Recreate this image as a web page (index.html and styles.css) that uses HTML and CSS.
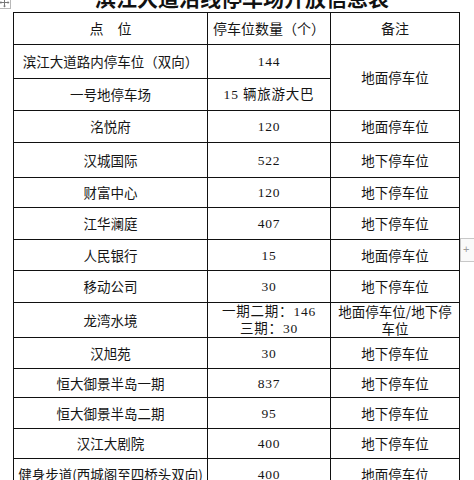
FILE: index.html
```html
<!DOCTYPE html>
<html lang="zh-CN">
<head>
<meta charset="utf-8">
<title>滨江大道沿线停车场开放信息表</title>
<link rel="stylesheet" href="styles.css">
</head>
<body>
<div class="page">
  <svg class="move-handle" width="13" height="13" viewBox="0 0 13 13">
    <rect x="0.5" y="0.5" width="12" height="12" fill="#fff" stroke="#b8b8b8"/>
    <path d="M6.5 2v9M2 6.5h9" stroke="#777" stroke-width="1"/>
    <path d="M6.5 1.5l-1.5 1.8h3zM6.5 11.5l-1.5-1.8h3zM1.5 6.5l1.8-1.5v3zM11.5 6.5l-1.8-1.5v3z" fill="#777"/>
  </svg>
  <h1 class="title">滨江大道沿线停车场开放信息表</h1>
  <table class="info">
    <colgroup>
      <col class="c1"><col class="c2"><col class="c3">
    </colgroup>
    <tr class="r32 head">
      <th>点　位</th><th>停车位数量（个）</th><th>备注</th>
    </tr>
    <tr class="r34">
      <td>滨江大道路内停车位（双向）</td><td class="num">144</td><td rowspan="2">地面停车位</td>
    </tr>
    <tr class="r32">
      <td>一号地停车场</td><td class="num">15 辆旅游大巴</td>
    </tr>
    <tr class="r32">
      <td>洺悦府</td><td class="num">120</td><td>地面停车位</td>
    </tr>
    <tr class="r35">
      <td>汉城国际</td><td class="num">522</td><td>地下停车位</td>
    </tr>
    <tr class="r30">
      <td>财富中心</td><td class="num">120</td><td>地下停车位</td>
    </tr>
    <tr class="r32">
      <td>江华澜庭</td><td class="num">407</td><td>地下停车位</td>
    </tr>
    <tr class="r31">
      <td>人民银行</td><td class="num">15</td><td>地面停车位</td>
    </tr>
    <tr class="r32">
      <td>移动公司</td><td class="num">30</td><td>地下停车位</td>
    </tr>
    <tr class="r35 two">
      <td>龙湾水境</td><td class="num">一期二期：146<br>三期：30</td><td>地面停车位/地下停<br>车位</td>
    </tr>
    <tr class="r31">
      <td>汉旭苑</td><td class="num">30</td><td>地下停车位</td>
    </tr>
    <tr class="r29">
      <td>恒大御景半岛一期</td><td class="num">837</td><td>地下停车位</td>
    </tr>
    <tr class="r31">
      <td>恒大御景半岛二期</td><td class="num">95</td><td>地下停车位</td>
    </tr>
    <tr class="r30">
      <td>汉江大剧院</td><td class="num">400</td><td>地下停车位</td>
    </tr>
    <tr class="r32">
      <td>健身步道(西城阁至四桥头双向)</td><td class="num">400</td><td>地面停车位</td>
    </tr>
  </table>
  <div class="add-handle">+</div>
</div>
</body>
</html>
```

FILE: styles.css
```css
html, body {
  margin: 0;
  padding: 0;
  background: #fff;
}

.page {
  position: relative;
  width: 474px;
  height: 480px;
  overflow: hidden;
  font-family: "Noto Sans CJK SC", "Noto Sans", sans-serif;
  color: #151515;
}

.move-handle {
  position: absolute;
  left: -2px;
  top: -4px;
}

.title {
  margin: -13px 0 0 0;
  padding-left: 10px;
  height: 21px;
  line-height: 21px;
  font-size: 21px;
  font-weight: 700;
  text-align: center;
  color: #111;
  letter-spacing: 0;
}

.info {
  margin: 4px 0 0 13px;
  border-collapse: collapse;
  table-layout: fixed;
  width: 447px;
}

.c1 { width: 194px; }
.c2 { width: 123px; }
.c3 { width: 129px; }

.info th,
.info td {
  border: 1px solid #111;
  padding: 0 2px;
  text-align: center;
  vertical-align: middle;
  font-size: 13.5px;
  font-weight: 400;
  line-height: 17px;
  white-space: nowrap;
}

.info th {
  font-size: 14px;
}

.info td.num {
  font-family: "Liberation Serif", "Noto Sans CJK SC", serif;
  letter-spacing: 0.8px;
}

.r29 { height: 29px; }
.r30 { height: 30px; }
.r31 { height: 31px; }
.r32 { height: 32px; }
.r34 { height: 34px; }
.r35 { height: 35px; }

.add-handle {
  position: absolute;
  left: 460px;
  top: 238px;
  width: 18px;
  height: 24px;
  box-sizing: border-box;
  border: 1px solid #c8c8c8;
  background: #fafafa;
  color: #9a9a9a;
  font-family: "Liberation Sans", sans-serif;
  font-size: 11px;
  line-height: 20px;
  padding-left: 2px;
}
```
